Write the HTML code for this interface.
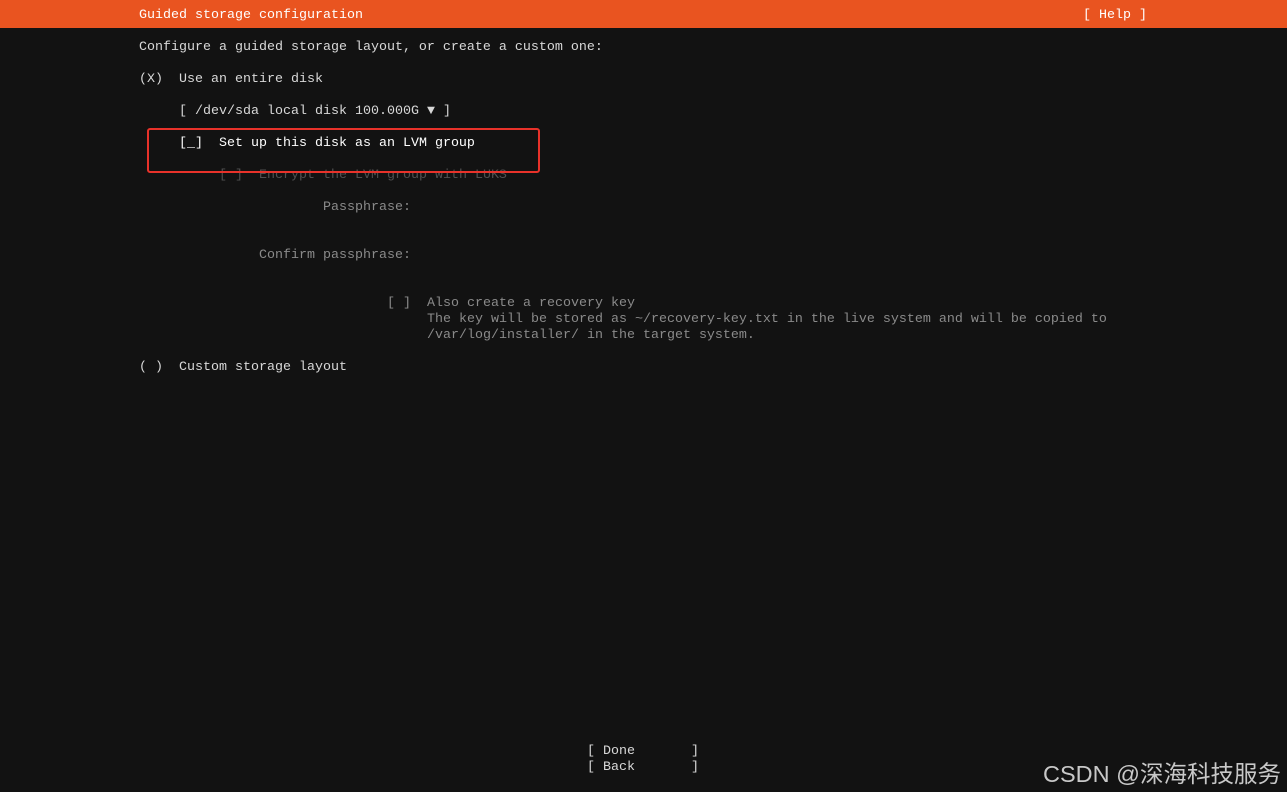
<!DOCTYPE html>
<html><head><meta charset="utf-8"><style>
html,body{margin:0;padding:0;}
body{width:1287px;height:792px;background:#121212;position:relative;overflow:hidden;font-family:"Liberation Mono",monospace;font-size:13.33px;color:#d8d8d8;}
.hdr{position:absolute;left:0;top:0;width:1287px;height:28px;background:#e95420;}
.t{position:absolute;white-space:pre;line-height:16px;height:16px;margin-top:2px;}
.g{color:#8a8a8a;}
.dg{color:#505050;}
.w{color:#fff;}
.box{position:absolute;left:147px;top:128px;width:389px;height:41px;border:2px solid #e8322a;border-radius:3px;}
.wm{position:absolute;left:1043px;top:755px;font-family:"Liberation Sans","Noto Sans CJK SC",sans-serif;font-size:23.5px;color:#c8c8c8;white-space:nowrap;}
</style></head><body>
<div class="hdr"></div>
<div class="t w" style="left:139px;top:6px">Guided storage configuration</div>
<div class="t w" style="left:1083px;top:6px">[ Help ]</div>
<div class="t" style="left:139px;top:38px">Configure a guided storage layout, or create a custom one:</div>
<div class="t" style="left:139px;top:70px">(X)  Use an entire disk</div>
<div class="t" style="left:179px;top:102px">[ /dev/sda local disk 100.000G ▼ ]</div>
<div class="t w" style="left:179px;top:134px">[_]  Set up this disk as an LVM group</div>
<div class="t dg" style="left:219px;top:166px">[ ]  Encrypt the LVM group with LUKS</div>
<div class="t g" style="left:323px;top:198px">Passphrase:</div>
<div class="t g" style="left:259px;top:246px">Confirm passphrase:</div>
<div class="t g" style="left:387px;top:294px">[ ]  Also create a recovery key</div>
<div class="t g" style="left:427px;top:310px">The key will be stored as ~/recovery-key.txt in the live system and will be copied to</div>
<div class="t g" style="left:427px;top:326px">/var/log/installer/ in the target system.</div>
<div class="t" style="left:139px;top:358px">( )  Custom storage layout</div>
<div class="t" style="left:587px;top:742px">[ Done       ]</div>
<div class="t" style="left:587px;top:758px">[ Back       ]</div>
<div class="box"></div>
<div class="wm">CSDN @深海科技服务</div>
</body></html>
